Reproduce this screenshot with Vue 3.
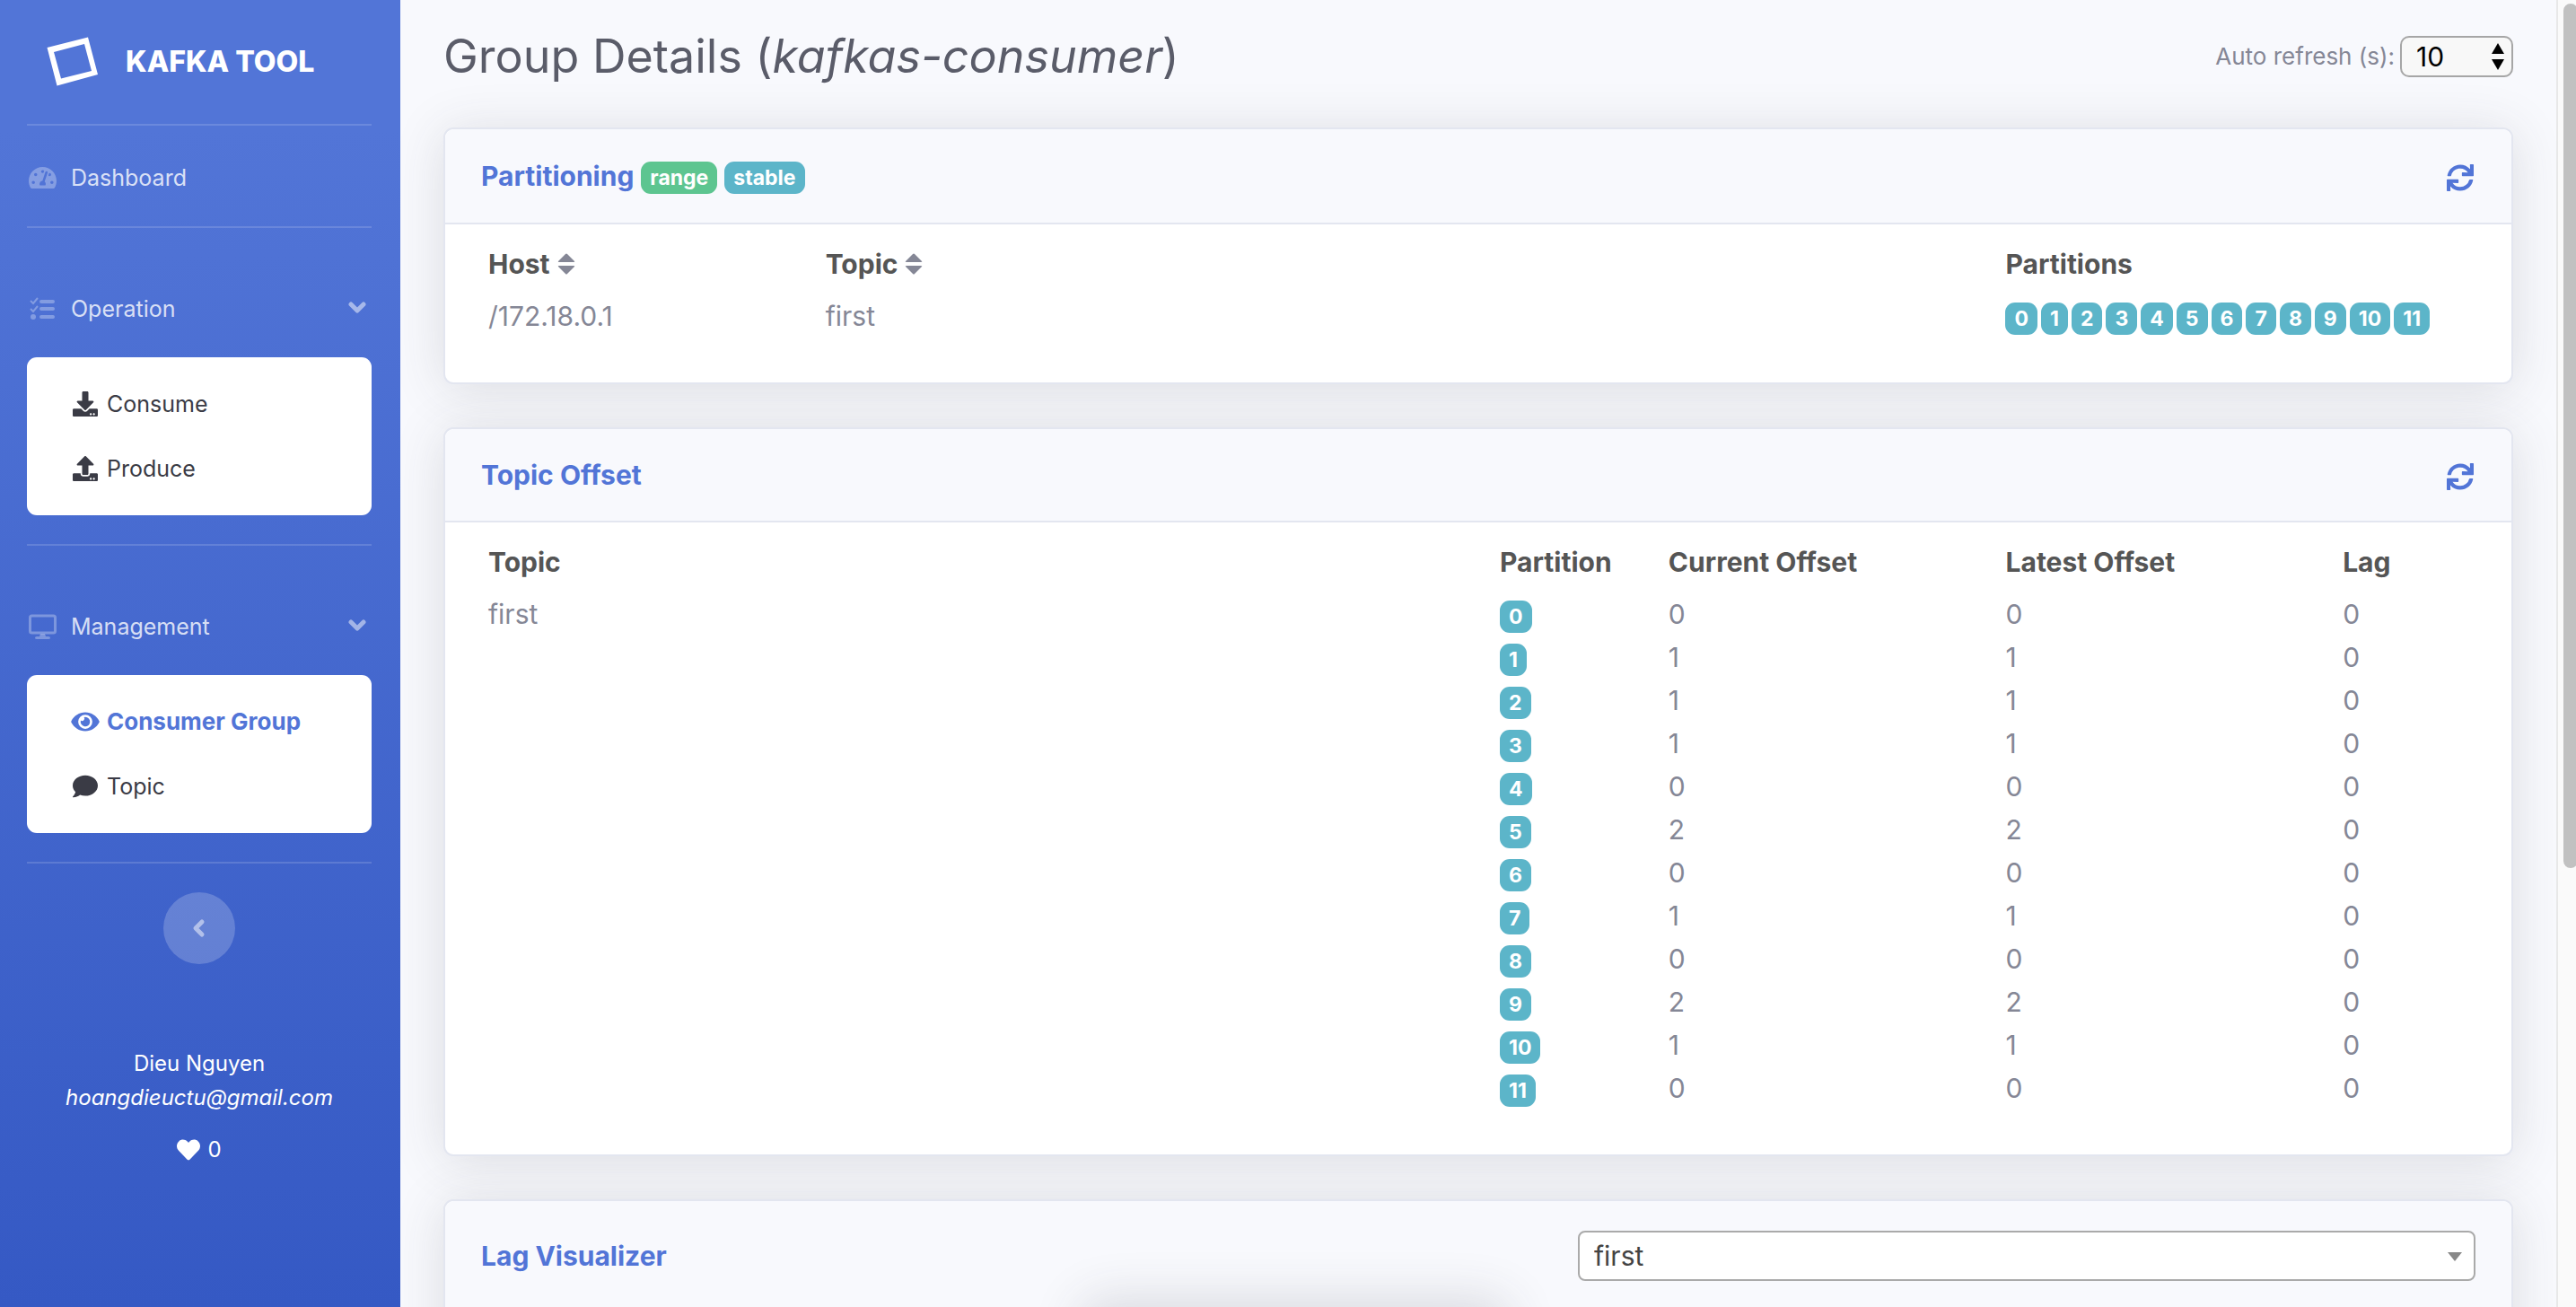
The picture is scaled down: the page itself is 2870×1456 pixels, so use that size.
<script setup>
import { ref } from 'vue'

const refreshSeconds = ref('10')
const lagTopic = ref('first')

const icons = {
  download: 'M216 0h80c13.3 0 24 10.7 24 24v168h87.7c17.8 0 26.7 21.5 14.1 34.1L269.7 378.3c-7.5 7.5-19.8 7.5-27.3 0L90.1 226.1c-12.6-12.6-3.7-34.1 14.1-34.1H192V24c0-13.3 10.7-24 24-24zm296 376v112c0 13.3-10.7 24-24 24H24c-13.3 0-24-10.7-24-24V376c0-13.3 10.7-24 24-24h146.7l49 49c20.1 20.1 52.5 20.1 72.6 0l49-49H488c13.3 0 24 10.7 24 24zm-124 88c0-11-9-20-20-20s-20 9-20 20 9 20 20 20 20-9 20-20zm64 0c0-11-9-20-20-20s-20 9-20 20 9 20 20 20 20-9 20-20z',
  upload: 'M296 384h-80c-13.3 0-24-10.7-24-24V192h-87.7c-17.8 0-26.7-21.5-14.1-34.1L242.3 5.7c7.5-7.5 19.8-7.5 27.3 0l152.2 152.2c12.6 12.6 3.7 34.1-14.1 34.1H320v168c0 13.3-10.7 24-24 24zm216-8v112c0 13.3-10.7 24-24 24H24c-13.3 0-24-10.7-24-24V376c0-13.3 10.7-24 24-24h136v8c0 30.9 25.1 56 56 56h80c30.9 0 56-25.1 56-56v-8h136c13.3 0 24 10.7 24 24zm-124 88c0-11-9-20-20-20s-20 9-20 20 9 20 20 20 20-9 20-20zm64 0c0-11-9-20-20-20s-20 9-20 20 9 20 20 20 20-9 20-20z',
  eye: 'M572.52 241.4C518.29 135.59 410.93 64 288 64S57.68 135.64 3.48 241.41a32.35 32.35 0 0 0 0 29.19C57.71 376.41 165.07 448 288 448s230.32-71.64 284.52-177.41a32.35 32.35 0 0 0 0-29.19zM288 400a144 144 0 1 1 144-144 143.93 143.93 0 0 1-144 144zm0-240a95.31 95.31 0 0 0-25.31 3.79 47.85 47.85 0 0 1-66.9 66.9A95.78 95.78 0 1 0 288 160z',
  comment: 'M256 32C114.6 32 0 125.1 0 240c0 49.6 21.4 95 57 130.7C44.5 421.1 2.7 466 2.2 466.5c-2.2 2.3-2.8 5.7-1.5 8.7S4.8 480 8 480c66.3 0 116-31.8 140.6-51.4 32.7 12.3 69 19.4 107.4 19.4 141.4 0 256-93.1 256-208S397.4 32 256 32z',
  gauge: 'M288 32C128.94 32 0 160.94 0 320c0 52.8 14.25 102.26 39.06 144.8 5.61 9.62 16.3 15.2 27.44 15.2h443c11.14 0 21.83-5.58 27.44-15.2C561.75 422.26 576 372.8 576 320c0-159.06-128.94-288-288-288zm0 64c14.71 0 26.58 10.13 30.32 23.65-1.11 2.26-2.64 4.23-3.45 6.67l-9.22 27.67c-5.13 3.49-10.97 6.01-17.64 6.01-17.67 0-32-14.33-32-32S270.33 96 288 96zM96 384c-17.67 0-32-14.33-32-32s14.33-32 32-32 32 14.33 32 32-14.33 32-32 32zm48-160c-17.67 0-32-14.33-32-32s14.33-32 32-32 32 14.33 32 32-14.33 32-32 32zm246.77-72.41l-61.33 184C343.13 347.33 352 364.54 352 384c0 11.72-3.38 22.55-8.88 32H232.88c-5.5-9.45-8.88-20.28-8.88-32 0-33.94 26.5-61.43 59.9-63.59l61.34-184.01c4.17-12.56 17.73-19.45 30.36-15.17 12.57 4.19 19.35 17.79 15.17 30.36zm14.66 57.2l15.52-46.55c3.47-1.29 7.13-2.23 11.05-2.23 17.67 0 32 14.33 32 32s-14.33 32-32 32c-11.38-.01-20.89-6.28-26.57-15.22zM480 384c-17.67 0-32-14.33-32-32s14.33-32 32-32 32 14.33 32 32-14.33 32-32 32z',
  sync: 'M440.65 12.57l4 82.77A247.16 247.16 0 0 0 255.83 8C134.73 8 33.91 94.92 12.29 209.82A12 12 0 0 0 24.09 224h49.05a12 12 0 0 0 11.67-9.26 175.91 175.91 0 0 1 317-56.94l-101.46-4.86a12 12 0 0 0-12.57 12v47.41a12 12 0 0 0 12 12H500a12 12 0 0 0 12-12V12a12 12 0 0 0-12-12h-47.37a12 12 0 0 0-11.98 12.57zM255.83 432a175.61 175.61 0 0 1-146-77.8l101.8 4.87a12 12 0 0 0 12.57-12v-47.4a12 12 0 0 0-12-12H12a12 12 0 0 0-12 12V500a12 12 0 0 0 12 12h47.35a12 12 0 0 0 12-12.6l-4.15-82.57A247.17 247.17 0 0 0 255.83 504c121.11 0 221.93-86.92 243.55-201.82a12 12 0 0 0-11.8-14.18h-49.05a12 12 0 0 0-11.67 9.26A175.86 175.86 0 0 1 255.83 432z',
  heart: 'M462.3 62.6C407.5 15.9 326 24.3 275.7 76.2L256 96.5l-19.7-20.3C186.1 24.3 104.5 15.9 49.7 62.6c-62.8 53.6-66.1 149.8-9.9 207.9l193.5 199.8c12.5 12.9 32.8 12.9 45.3 0l193.5-199.8c56.3-58.1 53-154.3-9.8-207.9z',
}

const sections = [
  {
    label: 'Operation',
    icon: 'tasks',
    items: [
      { label: 'Consume', icon: icons.download, viewBox: '-32 0 576 512' },
      { label: 'Produce', icon: icons.upload, viewBox: '-32 0 576 512' },
    ],
  },
  {
    label: 'Management',
    icon: 'desktop',
    items: [
      { label: 'Consumer Group', icon: icons.eye, viewBox: '0 0 576 512', active: true },
      { label: 'Topic', icon: icons.comment, viewBox: '-32 0 576 512' },
    ],
  },
]

const offsets = [0, 1, 1, 1, 0, 2, 0, 1, 0, 2, 1, 0].map((offset, partition) => ({
  partition,
  current: offset,
  latest: offset,
  lag: 0,
}))
</script>

<template>
  <div class="page">
    <nav class="sidebar">
      <a class="brand" href="#">
        <svg class="brand-mark" viewBox="0 0 58 56" aria-hidden="true">
          <path fill="#fff" fill-rule="evenodd" d="M.5 12 46 .5 57 42 11.500 54.500ZM8 17l8 29.500L50 38 42 8Z" />
        </svg>
        <span class="brand-name">KAFKA TOOL</span>
      </a>
      <hr class="rule" />
      <a class="nav-link dashboard" href="#">
        <svg class="nav-icon" viewBox="0 0 576 512" aria-hidden="true"><path fill="currentColor" :d="icons.gauge" /></svg>
        <span>Dashboard</span>
      </a>
      <hr class="rule" />

      <template v-for="section in sections" :key="section.label">
        <a class="nav-link section-link" href="#">
          <svg v-if="section.icon === 'tasks'" class="nav-icon" viewBox="0 0 31 28" aria-hidden="true">
            <path fill="none" stroke="currentColor" stroke-width="2" d="m2 5 3 3 5-6M2 14l3 3 5-6" />
            <circle cx="5" cy="23" r="3" fill="currentColor" />
            <path fill="none" stroke="currentColor" stroke-width="4" stroke-linecap="round" d="M14 6h13M14 14h13M14 23h13" />
          </svg>
          <svg v-else class="nav-icon" viewBox="0 0 31 28" aria-hidden="true">
            <rect x="1.500" y="2" width="28" height="19" rx="2" fill="none" stroke="currentColor" stroke-width="3" />
            <path fill="currentColor" d="M13 22h5l1 3h3q2 0 2 1.500T22 28H9q-2 0-2-1.500T9 25h3Z" />
          </svg>
          <span>{{ section.label }}</span>
          <svg class="chevron" viewBox="0 0 22 16" aria-hidden="true">
            <path fill="none" stroke="currentColor" stroke-width="5" stroke-linecap="round" stroke-linejoin="round" d="m4 3 7 7 7-7" />
          </svg>
        </a>
        <ul class="submenu">
          <li v-for="item in section.items" :key="item.label">
            <a class="submenu-link" :class="{ active: item.active }" href="#">
              <svg class="submenu-icon" :viewBox="item.viewBox" aria-hidden="true"><path fill="currentColor" :d="item.icon" /></svg>
              <span>{{ item.label }}</span>
            </a>
          </li>
        </ul>
        <hr class="rule" />
      </template>

      <button class="collapse" type="button" aria-label="Collapse sidebar">
        <svg viewBox="0 0 16 22" aria-hidden="true">
          <path fill="none" stroke="currentColor" stroke-width="5" stroke-linecap="round" stroke-linejoin="round" d="m11 4-7 7 7 7" />
        </svg>
      </button>

      <div class="author">
        <span>Dieu Nguyen</span>
        <a href="mailto:hoangdieuctu@gmail.com">hoangdieuctu@gmail.com</a>
        <span class="likes">
          <svg viewBox="0 0 512 512" aria-hidden="true"><path fill="currentColor" :d="icons.heart" /></svg>
          <span>0</span>
        </span>
      </div>
    </nav>

    <main class="content">
      <header class="page-head">
        <h1>Group Details (<em>kafkas-consumer</em>)</h1>
        <div class="refresh-rate">
          <label for="refresh">Auto refresh (s):</label>
          <div class="select-wrap">
            <select id="refresh" v-model="refreshSeconds" class="native-select">
              <option>10</option>
              <option>30</option>
              <option>60</option>
            </select>
            <svg class="stepper" viewBox="0 0 14 30" aria-hidden="true"><path d="m7 0 7 12H0ZM0 18h14L7 30Z" /></svg>
          </div>
        </div>
      </header>

      <section class="card">
        <div class="card-head with-badges">
          <div class="title-row">
            <h2>Partitioning</h2>
            <span class="badge green">range</span>
            <span class="badge">stable</span>
          </div>
          <button class="sync" type="button" aria-label="Refresh partitioning">
            <svg viewBox="0 0 512 512" aria-hidden="true"><path fill="currentColor" :d="icons.sync" /></svg>
          </button>
        </div>
        <div class="card-body">
          <table>
            <colgroup>
              <col class="span-2" />
              <col class="span-7" />
              <col class="span-3" />
            </colgroup>
            <thead>
              <tr>
                <th v-for="name in ['Host', 'Topic']" :key="name" scope="col">
                  <span class="sortable">
                    {{ name }}
                    <svg viewBox="0 0 20 24" aria-hidden="true"><path fill="currentColor" d="M9 1q1-1 2 0l8 8q1 1-1 1H2Q0 10 1 9ZM2 14h16q2 0 1 1l-8 8q-1 1-2 0l-8-8q-1-1 1-1Z" /></svg>
                  </span>
                </th>
                <th scope="col">Partitions</th>
              </tr>
            </thead>
            <tbody>
              <tr>
                <td>/172.18.0.1</td>
                <td>first</td>
                <td>
                  <div class="badge-row">
                    <span v-for="row in offsets" :key="row.partition" class="badge">{{ row.partition }}</span>
                  </div>
                </td>
              </tr>
            </tbody>
          </table>
        </div>
      </section>

      <section class="card">
        <div class="card-head">
          <h2>Topic Offset</h2>
          <button class="sync" type="button" aria-label="Refresh topic offset">
            <svg viewBox="0 0 512 512" aria-hidden="true"><path fill="currentColor" :d="icons.sync" /></svg>
          </button>
        </div>
        <div class="card-body">
          <table>
            <colgroup>
              <col class="span-6" />
              <col class="span-1" />
              <col class="span-2" />
              <col class="span-2" />
              <col class="span-1" />
            </colgroup>
            <thead>
              <tr>
                <th scope="col">Topic</th>
                <th scope="col">Partition</th>
                <th scope="col">Current Offset</th>
                <th scope="col">Latest Offset</th>
                <th scope="col">Lag</th>
              </tr>
            </thead>
            <tbody>
              <tr v-for="(row, index) in offsets" :key="row.partition">
                <td v-if="index === 0" :rowspan="offsets.length">first</td>
                <td>
                  <div class="badge-row"><span class="badge">{{ row.partition }}</span></div>
                </td>
                <td>{{ row.current }}</td>
                <td>{{ row.latest }}</td>
                <td>{{ row.lag }}</td>
              </tr>
            </tbody>
          </table>
        </div>
      </section>

      <section class="card lag-card">
        <div class="card-head lag-head">
          <h2 id="lag-title">Lag Visualizer</h2>
          <div class="select-wrap lag-select">
            <select v-model="lagTopic" class="topic-select" aria-labelledby="lag-title">
              <option>first</option>
            </select>
            <svg class="caret" viewBox="0 0 16 10" aria-hidden="true"><path fill="#888" d="M0 0h16L8 10Z" /></svg>
          </div>
        </div>
      </section>
    </main>

    <div class="scrollbar" aria-hidden="true"><div class="thumb"></div></div>
    <div class="toast" aria-hidden="true"></div>
  </div>
</template>

<style>
body {
  margin: 0;
  background: #f8f9fd;
}
</style>

<style scoped>
.page {
  position: relative;
  display: flex;
  height: 100vh;
  overflow: hidden;
  background: #f8f9fd;
  color: #858796;
  font: 30px/48px Inter, "Liberation Sans", sans-serif;
}

*,
*::before,
*::after {
  box-sizing: border-box;
}

a {
  color: inherit;
  text-decoration: none;
}

svg {
  display: block;
}

/* Sidebar */
.sidebar {
  position: relative;
  z-index: 1;
  flex: 0 0 446px;
  display: flex;
  flex-direction: column;
  padding: 0 32px 0 30px;
  background: linear-gradient(180deg, #5275d7 10%, #3559c4 100%);
  color: #fff;
  font-size: 25px;
  line-height: 38px;
}

.brand {
  display: flex;
  align-items: center;
  height: 138px;
  padding-left: 22px;
}

.brand-mark {
  width: 58px;
  height: 56px;
}

.brand-name {
  margin-left: 30px;
  font-size: 32px;
  font-weight: 800;
}

.rule {
  width: 100%;
  height: 2px;
  margin: 0;
  border: 0;
  background: rgba(255, 255, 255, 0.15);
}

.nav-link {
  display: flex;
  align-items: center;
  color: rgba(255, 255, 255, 0.8);
}

.dashboard {
  height: 112px;
  padding-top: 4px;
}

.section-link {
  height: 144px;
  padding-top: 36px;
}

.nav-icon {
  width: 31px;
  height: 28px;
  margin: 0 16px 0 2px;
  color: rgba(255, 255, 255, 0.3);
}

.chevron {
  width: 22px;
  height: 16px;
  margin-left: auto;
  margin-right: 5px;
  color: rgba(255, 255, 255, 0.5);
}

.submenu {
  margin: 0 0 32px;
  padding: 16px 0;
  border-radius: 11px;
  background: #fff;
  list-style: none;
}

.submenu-link {
  display: flex;
  align-items: center;
  gap: 8px;
  height: 72px;
  padding-left: 49px;
  color: #3a3b45;
}

.submenu-link.active {
  color: #5275d7;
  font-size: 26px;
  font-weight: 700;
}

.submenu-icon {
  width: 32px;
  height: 28px;
}

.collapse {
  display: grid;
  place-items: center;
  align-self: center;
  width: 80px;
  height: 80px;
  margin: 32px 0 92px;
  padding: 0;
  border: 0;
  border-radius: 50%;
  background: rgba(255, 255, 255, 0.2);
  color: rgba(255, 255, 255, 0.5);
}

.collapse svg {
  width: 16px;
  height: 22px;
}

.author {
  display: flex;
  flex-direction: column;
  align-items: center;
  font-size: 24px;
}

.author a {
  font-style: italic;
}

.likes {
  display: flex;
  align-items: center;
  gap: 8px;
  margin-top: 20px;
}

.likes svg {
  width: 26px;
  height: 26px;
}

/* Main column */
.content {
  flex: 1;
  min-width: 0;
  padding: 30px 48px 0;
}

.page-head {
  display: flex;
  align-items: center;
  justify-content: space-between;
  height: 66px;
  margin-bottom: 46px;
}

h1 {
  margin: 0;
  color: #5a5c69;
  font-size: 52px;
  font-weight: 400;
  line-height: 66px;
}

.refresh-rate {
  display: flex;
  align-items: center;
  gap: 6px;
  font-size: 26px;
}

.select-wrap {
  position: relative;
}

select {
  display: block;
  width: 100%;
  margin: 0;
  border: 2px solid #a6a6a6;
  appearance: none;
  font: inherit;
  font-size: 30px;
}

.native-select {
  width: 126px;
  height: 46px;
  padding: 0 0 0 16px;
  border-radius: 10px;
  background: #f8f8f8;
  color: #000;
  line-height: 42px;
}

.stepper {
  position: absolute;
  top: 8px;
  right: 10px;
  width: 14px;
  height: 30px;
  pointer-events: none;
}

.card {
  margin-bottom: 48px;
  border: 2px solid #e3e6f0;
  border-radius: 11px;
  background: #fff;
  box-shadow: 0 5px 56px rgba(58, 59, 69, 0.15);
}

.card-head {
  display: flex;
  align-items: center;
  justify-content: space-between;
  height: 104px;
  padding: 0 42px 0 40px;
  border-bottom: 2px solid #e3e6f0;
  border-radius: 10px 10px 0 0;
  background: #f8f9fd;
}

.card-head.with-badges {
  height: 106px;
}

.title-row {
  display: flex;
  align-items: center;
  gap: 8px;
}

.title-row .badge {
  margin-top: 4px;
}

h2 {
  margin: 0;
  color: #5275d7;
  font-size: 30px;
  font-weight: 700;
  line-height: 48px;
}

.badge {
  height: 36px;
  padding: 0 10px;
  border-radius: 11px;
  background: #5cb5c9;
  color: #fff;
  font-size: 23px;
  font-weight: 700;
  line-height: 36px;
}

.badge.green {
  background: #5dc590;
}

.badge-row {
  display: flex;
  align-items: center;
  gap: 4px;
  height: 48px;
  padding-top: 6px;
}

.sync {
  width: 30px;
  height: 30px;
  margin-top: 4px;
  padding: 0;
  border: 0;
  background: none;
  color: #5275d7;
}

.sync svg {
  width: 30px;
  height: 30px;
}

.card-body {
  padding: 20px 0 50px 48px;
}

table {
  width: 100%;
  border-collapse: collapse;
  table-layout: fixed;
}

.span-1 { width: 8.3333%; }
.span-2 { width: 16.6667%; }
.span-3 { width: 25%; }
.span-6 { width: 50%; }
.span-7 { width: 58.3333%; }

th,
td {
  padding: 0;
  text-align: left;
  vertical-align: top;
}

th {
  padding-bottom: 10px;
  color: #555;
  font-weight: 700;
}

.sortable {
  display: flex;
  align-items: center;
  gap: 8px;
}

.sortable svg {
  width: 20px;
  height: 24px;
  color: #858796;
}

.lag-card {
  height: 1000px;
}

.lag-head {
  height: 124px;
  padding-right: 40px;
}

.lag-select {
  width: 1000px;
}

.topic-select {
  height: 56px;
  padding: 0 16px;
  border-color: #aaa;
  border-radius: 8px;
  background: #fff;
  color: #444;
  line-height: 52px;
}

.caret {
  position: absolute;
  top: 24px;
  right: 15px;
  width: 16px;
  height: 10px;
  pointer-events: none;
}

/* Page scrollbar */
.scrollbar {
  flex: 0 0 22px;
  padding: 4px 0 0 6px;
  border-left: 2px solid #e8e8e8;
  background: #fafafa;
  overflow: hidden;
}

.thumb {
  width: 16px;
  height: 66.3%;
  border-radius: 8px;
  background: #c1c1c1;
}

/* Toast parked just under the lower edge; only its shadow shows */
.toast {
  position: absolute;
  top: 100%;
  left: 50%;
  width: 460px;
  height: 80px;
  margin-left: -222px;
  border-radius: 12px;
  box-shadow: 0 0 56px 8px rgba(58, 59, 69, 0.16);
}
</style>
